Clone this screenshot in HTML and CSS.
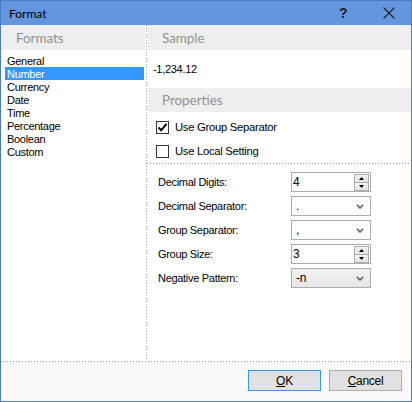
FILE: index.html
```html
<!DOCTYPE html>
<html>
<head>
<meta charset="utf-8">
<link rel="stylesheet" href="styles.css">
</head>
<body>
<div class="window">
  <div class="titlebar">
    <span class="title">Format</span>
    <span class="help">?</span>
    <span class="close"><svg width="12" height="12" viewBox="0 0 12 12"><path d="M0.5 0.5 L11.5 11.5 M11.5 0.5 L0.5 11.5" stroke="#1f1f1f" stroke-width="1.1" fill="none"/></svg></span>
  </div>
  <div class="main">
    <div class="left">
      <div class="header">Formats</div>
      <ul class="list">
        <li>General</li>
        <li class="selected">Number</li>
        <li>Currency</li>
        <li>Date</li>
        <li>Time</li>
        <li>Percentage</li>
        <li>Boolean</li>
        <li>Custom</li>
      </ul>
    </div>
    <div class="vsep"></div>
    <div class="right">
      <div class="header">Sample</div>
      <div class="sample">-1,234.12</div>
      <div class="header header-sm">Properties</div>
      <div class="checks">
        <div class="check"><span class="box"><svg width="11" height="11" viewBox="0 0 11 11"><path d="M1.5 5.5 L4.2 8.3 L9.5 1.8" stroke="#000" stroke-width="2" fill="none"/></svg></span><span>Use Group Separator</span></div>
        <div class="check"><span class="box"></span><span>Use Local Setting</span></div>
      </div>
      <div class="hsep"></div>
      <div class="form">
        <div class="row">
          <span class="label">Decimal Digits:</span>
          <div class="field spin"><span class="val">4</span>
            <span class="spinbtns">
              <span class="sb"><svg width="5" height="3" viewBox="0 0 5 3"><path d="M0 3 L2.5 0 L5 3 Z" fill="#000"/></svg></span>
              <span class="sb"><svg width="5" height="3" viewBox="0 0 5 3"><path d="M0 0 L2.5 3 L5 0 Z" fill="#000"/></svg></span>
            </span>
          </div>
        </div>
        <div class="row">
          <span class="label">Decimal Separator:</span>
          <div class="field combo"><span class="val">.</span><svg class="chev" width="8" height="5" viewBox="0 0 8 5"><path d="M0.8 0.8 L4 4 L7.2 0.8" stroke="#606060" stroke-width="1.6" fill="none"/></svg></div>
        </div>
        <div class="row">
          <span class="label">Group Separator:</span>
          <div class="field combo"><span class="val">,</span><svg class="chev" width="8" height="5" viewBox="0 0 8 5"><path d="M0.8 0.8 L4 4 L7.2 0.8" stroke="#606060" stroke-width="1.6" fill="none"/></svg></div>
        </div>
        <div class="row">
          <span class="label">Group Size:</span>
          <div class="field spin"><span class="val">3</span>
            <span class="spinbtns">
              <span class="sb"><svg width="5" height="3" viewBox="0 0 5 3"><path d="M0 3 L2.5 0 L5 3 Z" fill="#000"/></svg></span>
              <span class="sb"><svg width="5" height="3" viewBox="0 0 5 3"><path d="M0 0 L2.5 3 L5 0 Z" fill="#000"/></svg></span>
            </span>
          </div>
        </div>
        <div class="row">
          <span class="label">Negative Pattern:</span>
          <div class="field combo list-combo"><span class="val">-n</span><svg class="chev" width="8" height="5" viewBox="0 0 8 5"><path d="M0.8 0.8 L4 4 L7.2 0.8" stroke="#606060" stroke-width="1.6" fill="none"/></svg></div>
        </div>
      </div>
    </div>
  </div>
  <div class="hsep"></div>
  <div class="footer">
    <div class="btn default"><u>O</u>K</div>
    <div class="btn"><u>C</u>ancel</div>
  </div>
</div>
</body>
</html>
```

FILE: styles.css
```css
html, body {
  margin: 0;
  padding: 0;
  background: #ffffff;
}

.window {
  box-sizing: border-box;
  width: 412px;
  height: 402px;
  border: 1px solid #4a7cc8;
  display: flex;
  flex-direction: column;
  font-family: "Liberation Sans", Arial, sans-serif;
  font-size: 11px;
  letter-spacing: -0.3px;
  color: #000;
  background: #ffffff;
}

.titlebar {
  height: 24px;
  flex: none;
  background: #6495df;
  display: flex;
  align-items: center;
  padding-left: 8px;
}

.title {
  flex: 1;
  font-family: Lato, "Open Sans", sans-serif;
  font-size: 12px;
  letter-spacing: 0;
  color: #000;
  padding-top: 1px;
}

.help {
  width: 7px;
  margin-right: 37px;
  font-family: "Liberation Sans", Arial, sans-serif;
  font-weight: bold;
  font-size: 14px;
  letter-spacing: 0;
  color: #1f1f1f;
}

.close {
  width: 12px;
  height: 12px;
  margin-right: 16px;
  display: flex;
}

.main {
  flex: none;
  height: 336px;
  display: flex;
}

.left {
  width: 145px;
  display: flex;
  flex-direction: column;
}

.header {
  height: 25px;
  flex: none;
  background: #eeeeee;
  display: flex;
  align-items: center;
  padding-left: 14px;
  font-family: Lato, "Open Sans", sans-serif;
  font-size: 13.4px;
  letter-spacing: 0;
  color: #929292;
}

.left .header {
  margin-right: 1px;
  padding-left: 15px;
}

.header-sm {
  height: 24px;
}

.list {
  list-style: none;
  margin: 0;
  padding: 4px 2px 0 4px;
}

.list li {
  height: 13px;
  line-height: 11px;
  padding-top: 2px;
  padding-left: 2px;
  box-sizing: border-box;
  white-space: nowrap;
}

.list li.selected {
  background: #3399ff;
  color: #ffffff;
}

.vsep {
  width: 1px;
  flex: none;
  background-image: linear-gradient(to bottom, #a0a0a0 1px, transparent 1px);
  background-size: 1px 3px;
  background-repeat: repeat-y;
}

.right {
  flex: 1;
  display: flex;
  flex-direction: column;
  padding-left: 1px;
}

.right > .hsep {
  margin-left: -1px;
}

.sample {
  height: 38px;
  flex: none;
  display: flex;
  align-items: center;
  padding-left: 5px;
  padding-bottom: 1px;
  box-sizing: border-box;
}

.checks {
  padding-top: 3px;
  display: flex;
  flex-direction: column;
}

.check {
  height: 24px;
  display: flex;
  align-items: center;
  padding-left: 8px;
  font-size: 11.3px;
}

.box {
  box-sizing: border-box;
  width: 13px;
  height: 13px;
  border: 1px solid #333333;
  background: #ffffff;
  margin-right: 6px;
  display: flex;
  align-items: center;
  justify-content: center;
}

.hsep {
  height: 1px;
  flex: none;
  background-image: linear-gradient(to right, #a0a0a0 1px, transparent 1px);
  background-size: 3px 1px;
  background-repeat: repeat-x;
}

.form {
  padding-top: 8px;
  display: flex;
  flex-direction: column;
  gap: 4px;
}

.row {
  height: 20px;
  display: flex;
  align-items: center;
  padding-left: 10px;
}

.label {
  width: 133px;
}

.field {
  box-sizing: border-box;
  width: 80px;
  height: 20px;
  border: 1px solid #acacac;
  background: #ffffff;
  display: flex;
  align-items: center;
}

.field .val {
  flex: 1;
  font-size: 12px;
}

.spin .val {
  padding-left: 1px;
}

.combo .val {
  padding-left: 4px;
}

.spinbtns {
  margin-right: 1px;
  display: flex;
  flex-direction: column;
  gap: 1px;
  background: #acacac;
  border: 1px solid #acacac;
  box-sizing: border-box;
  width: 15px;
  height: 17px;
}

.sb {
  flex: 1;
  background: linear-gradient(#f4f4f4, #e4e4e4);
  display: flex;
  align-items: center;
  justify-content: center;
}

.chev {
  margin-right: 6px;
}

.list-combo {
  background: linear-gradient(#f2f2f2, #e6e6e6);
}

.footer {
  flex: 1;
  background: #f9f9f9;
  display: flex;
  justify-content: flex-end;
  align-items: flex-start;
  gap: 8px;
  padding-top: 8px;
  padding-right: 9px;
}

.btn {
  box-sizing: border-box;
  width: 73px;
  height: 21px;
  border: 1px solid #adadad;
  background: #e1e1e1;
  display: flex;
  align-items: center;
  justify-content: center;
  font-size: 12px;
}

.btn.default {
  border-color: #3399ff;
}
```
